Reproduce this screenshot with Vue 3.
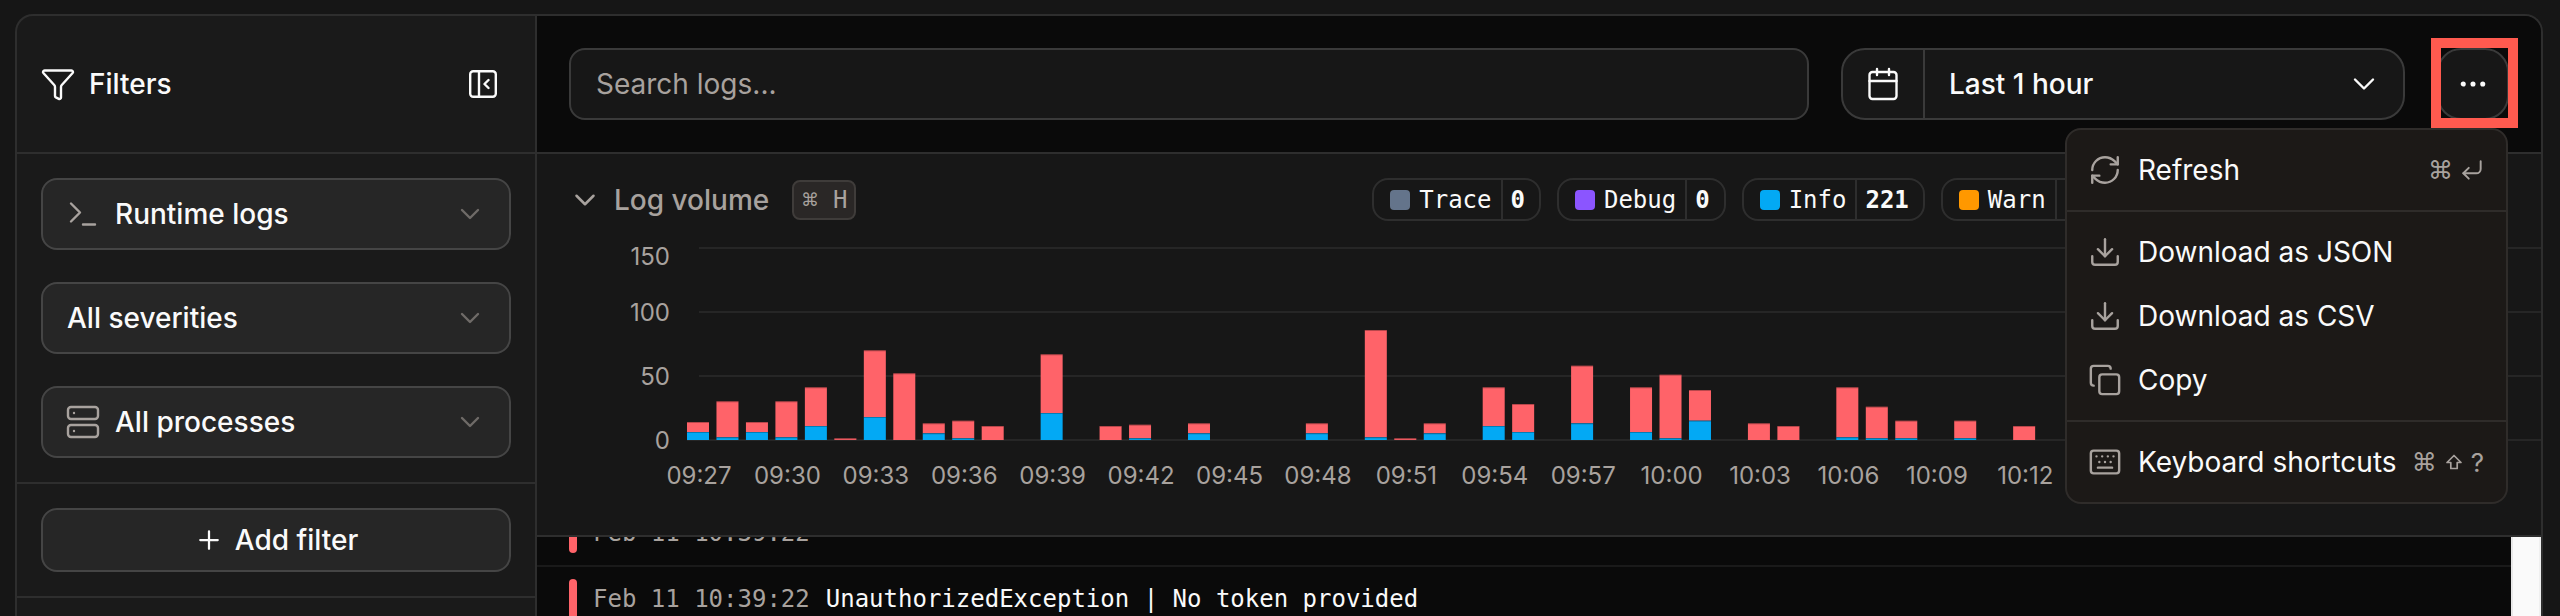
<script setup>
const axisY = [
  { label: '150', line: 248, text: 257 },
  { label: '100', line: 312, text: 313 },
  { label: '50', line: 376, text: 377 },
  { label: '0', line: 440, text: 441 }
]
// [index, top of the red bar, top of the blue bar], read in page pixels from the baseline at 440
const raw = [
  [0, 192, 202], [1, 171.3, 207.3], [2, 192, 202], [3, 171.3, 207.3], [4, 157.3, 196], [5, 208.3, 0],
  [6, 120.3, 187], [7, 143.3, 0], [8, 193.3, 203.3], [9, 190.7, 208.3], [10, 196, 0], [12, 124.3, 183],
  [14, 196, 0], [15, 194.7, 208.3], [17, 193.3, 203.3], [21, 193.3, 203.3], [23, 100, 207.3], [24, 208.3, 0],
  [25, 193.3, 203.3], [27, 157.3, 196], [28, 174, 202], [30, 135.7, 193.3], [32, 157.3, 202],
  [33, 144.7, 208.3], [34, 160, 190.7], [36, 193.3, 0], [37, 196, 0], [39, 157.3, 207.3],
  [40, 176.7, 208.3], [41, 190.7, 208.3], [43, 190.7, 208.3], [45, 196, 0]
]
const bars = raw.map(([i, red, blue]) => ({
  x: 687 + i * 29.47,
  redY: 230 + red,
  blueY: blue ? 230 + blue : 440
}))
const times = ['09:27', '09:30', '09:33', '09:36', '09:39', '09:42', '09:45', '09:48', '09:51', '09:54', '09:57', '10:00', '10:03', '10:06', '10:09', '10:12']
  .map((t, i) => ({ t, x: 699 + i * 88.42 }))
const legend = [
  { name: 'Trace', value: '0', color: '#64748b' },
  { name: 'Debug', value: '0', color: '#8b55ff' },
  { name: 'Info', value: '221', color: '#03a9f4' },
  { name: 'Warn', value: '0', color: '#ff9800' }
]
</script>

<template>
  <div class="page">
    <div class="shell">
      <aside class="side">
        <div class="side-head">
          <svg class="ic white" viewBox="0 0 24 24"><path d="M10 20a1 1 0 0 0 .553.895l2 1A1 1 0 0 0 14 21v-7a2 2 0 0 1 .517-1.341L21.74 4.67A1 1 0 0 0 21 3H3a1 1 0 0 0-.742 1.67l7.225 7.989A2 2 0 0 1 10 14z" /></svg>
          <span class="side-title">Filters</span>
          <svg class="collapse" viewBox="0 0 28 28"><rect x="1.2" y="1.2" width="25.6" height="25.6" rx="3" /><path d="M10 1v26M19.5 10l-4 4 4 4" /></svg>
        </div>
        <div class="side-group">
          <div class="select">
            <svg class="ic muted" viewBox="0 0 24 24"><path d="M4 17l6-6-6-6M12 19h8" /></svg>
            <span class="sel-text">Runtime logs</span>
            <svg class="chev dim end" viewBox="0 0 24 24"><path d="m6 9 6 6 6-6" /></svg>
          </div>
          <div class="select">
            <span class="sel-text">All severities</span>
            <svg class="chev dim end" viewBox="0 0 24 24"><path d="m6 9 6 6 6-6" /></svg>
          </div>
          <div class="select">
            <svg class="ic muted" viewBox="0 0 24 24"><rect x="2" y="2" width="20" height="8" rx="2" /><rect x="2" y="14" width="20" height="8" rx="2" /><path d="M6 6h.01M6 18h.01" /></svg>
            <span class="sel-text">All processes</span>
            <svg class="chev dim end" viewBox="0 0 24 24"><path d="m6 9 6 6 6-6" /></svg>
          </div>
        </div>
        <div class="side-add">
          <div class="add">
            <svg class="plus" viewBox="0 0 24 24"><path d="M5 12h14M12 5v14" /></svg>
            <span>Add filter</span>
          </div>
        </div>
      </aside>

      <main class="main">
        <header class="toolbar">
          <div class="search">Search logs...</div>
          <div class="date">
            <div class="date-ic">
              <svg class="ic white" viewBox="0 0 24 24"><path d="M8 2v4M16 2v4M3 10h18" /><rect x="3" y="4" width="18" height="18" rx="2" /></svg>
            </div>
            <div class="date-val">
              <span>Last 1 hour</span>
              <svg class="ic white end" viewBox="0 0 24 24"><path d="m6 9 6 6 6-6" /></svg>
            </div>
          </div>
          <div class="more">
            <svg class="ic white dots" viewBox="0 0 24 24"><circle cx="12" cy="12" r="1" /><circle cx="18.5" cy="12" r="1" /><circle cx="5.5" cy="12" r="1" /></svg>
            <span class="mark"></span>
          </div>
        </header>

        <section class="volume">
          <div class="vol-head">
            <svg class="chev-vol muted" viewBox="0 0 24 24"><path d="m6 9 6 6 6-6" /></svg>
            <span class="vol-title">Log volume</span>
            <kbd class="kbd"><span class="kbd-cmd">⌘</span><span>H</span></kbd>
            <div class="legends">
              <div v-for="l in legend" :key="l.name" class="legend">
                <span class="swatch" :style="{ background: l.color }"></span>
                <span class="leg-name">{{ l.name }}</span>
                <span class="leg-val">{{ l.value }}</span>
              </div>
            </div>
          </div>
          <svg class="chart" viewBox="537 221 2004 314" width="2004" height="314">
            <g v-for="a in axisY" :key="a.label">
              <line :x1="a.label === '0' ? 687 : 699" x2="2541" :y1="a.line" :y2="a.line" class="grid" />
              <text x="670" :y="a.text + 8" text-anchor="end" class="axis">{{ a.label }}</text>
            </g>
            <g v-for="b in bars" :key="b.x">
              <rect :x="b.x" :y="b.redY" width="22" :height="b.blueY - b.redY" fill="#ff6369" />
              <rect :x="b.x" :y="b.redY" width="22" height="1" fill="#000" opacity=".28" />
              <template v-if="b.blueY < 440">
                <rect :x="b.x" :y="b.blueY" width="22" :height="440 - b.blueY" fill="#03a9f4" />
                <rect :x="b.x" :y="b.blueY" width="22" height="1" fill="#000" opacity=".25" />
              </template>
            </g>
            <text v-for="t in times" :key="t.t" :x="t.x" y="484" text-anchor="middle" class="axis">{{ t.t }}</text>
          </svg>
        </section>

        <div class="logs">
          <div class="rows">
            <div class="row first">
              <span class="bar"></span>
              <span class="ts">Feb 11 10:39:22</span>
            </div>
            <div class="row">
              <span class="bar"></span>
              <span class="ts">Feb 11 10:39:22</span>
              <span class="msg">UnauthorizedException | No token provided</span>
            </div>
          </div>
          <div class="scroll"></div>
        </div>

        <div class="menu">
          <div class="m-group">
            <div class="m-item">
              <svg class="m-ic muted" viewBox="0 0 24 24"><path d="M3 12a9 9 0 0 1 9-9 9.75 9.75 0 0 1 6.74 2.74L21 8" /><path d="M21 3v5h-5" /><path d="M21 12a9 9 0 0 1-9 9 9.75 9.75 0 0 1-6.74-2.74L3 16" /><path d="M8 16H3v5" /></svg>
              <span class="m-text">Refresh</span>
              <span class="keys">
                <span class="key">⌘</span>
                <svg class="enter" viewBox="0 0 24 24"><path d="M20 4v7a4 4 0 0 1-4 4H4" /><path d="m9 10-5 5 5 5" /></svg>
              </span>
            </div>
          </div>
          <div class="m-group">
            <div class="m-item">
              <svg class="m-ic muted" viewBox="0 0 24 24"><path d="M12 15V3" /><path d="M21 15v4a2 2 0 0 1-2 2H5a2 2 0 0 1-2-2v-4" /><path d="m7 10 5 5 5-5" /></svg>
              <span class="m-text">Download as JSON</span>
            </div>
            <div class="m-item">
              <svg class="m-ic muted" viewBox="0 0 24 24"><path d="M12 15V3" /><path d="M21 15v4a2 2 0 0 1-2 2H5a2 2 0 0 1-2-2v-4" /><path d="m7 10 5 5 5-5" /></svg>
              <span class="m-text">Download as CSV</span>
            </div>
            <div class="m-item">
              <svg class="m-ic muted" viewBox="0 0 24 24"><rect x="8" y="8" width="14" height="14" rx="2" /><path d="M4 16c-1.1 0-2-.9-2-2V4c0-1.1.9-2 2-2h10c1.1 0 2 .9 2 2" /></svg>
              <span class="m-text">Copy</span>
            </div>
          </div>
          <div class="m-group">
            <div class="m-item">
              <svg class="m-ic muted" viewBox="0 0 24 24"><rect x="2" y="4" width="20" height="16" rx="2" /><path d="M6 8h.01M10 8h.01M14 8h.01M18 8h.01M8 12h.01M12 12h.01M16 12h.01M7 16h10" /></svg>
              <span class="m-text">Keyboard shortcuts</span>
              <span class="keys wide">
                <span class="key">⌘</span>
                <svg class="shift" viewBox="0 0 18 18"><path d="M9 2.5 16 9.5H12.2V15.5H5.8V9.5H2Z" /></svg>
                <span class="key q">?</span>
              </span>
            </div>
          </div>
        </div>
      </main>
    </div>
  </div>
</template>

<style>
html, body { margin: 0; background: #171717; }
</style>

<style scoped>
.page {
  width: 2560px;
  height: 616px;
  overflow: hidden;
  background: #161616;
  padding: 14px 17px 0 15px;
  box-sizing: border-box;
  font-family: Inter, "Liberation Sans", sans-serif;
  color: #fafafa;
}
.shell {
  display: flex;
  height: 640px;
  box-sizing: border-box;
  border: 2px solid #2e2e2e;
  border-bottom: 0;
  border-radius: 18px 18px 0 0;
  overflow: hidden;
  background: #1a1a1a;
}
svg { display: block; flex: none; }
.ic, .chev, .m-ic, .chev-vol {
  fill: none;
  stroke: currentColor;
  stroke-width: 1.6;
  stroke-linecap: round;
  stroke-linejoin: round;
}
.ic { width: 36px; height: 36px; }
.chev { width: 32px; height: 32px; margin-right: 2px; stroke-width: 1.8; }
.chev-vol { width: 34px; height: 34px; margin: 0 1px; stroke-width: 1.8; }
.m-ic { width: 34px; height: 34px; stroke-width: 1.7; }
.white { color: #fafafa; }
.muted { color: #a8a29e; }
.dim { color: #6f6b68; }
.end { margin-left: auto; }

.side {
  width: 520px;
  flex: none;
  box-sizing: border-box;
  border-right: 2px solid #2e2e2e;
}
.side-head {
  height: 138px;
  box-sizing: border-box;
  border-bottom: 2px solid #2e2e2e;
  display: flex;
  align-items: center;
  padding: 0 22px 0 23px;
}
.side-title {
  margin-left: 13px;
  font-size: 28px;
  font-weight: 500;
}
.collapse {
  width: 28px;
  height: 28px;
  margin-left: auto;
  margin-right: 16px;
  fill: none;
  stroke: #fafafa;
  stroke-width: 2.4;
  stroke-linecap: round;
  stroke-linejoin: round;
}
.side-group {
  display: flex;
  flex-direction: column;
  gap: 32px;
  padding: 24px;
  border-bottom: 2px solid #2e2e2e;
}
.select, .add {
  display: flex;
  align-items: center;
  box-sizing: border-box;
  background: #262626;
  border: 2px solid #454545;
  border-radius: 16px;
}
.select {
  height: 72px;
  padding: 0 21px 0 24px;
  font-size: 28px;
}
.select > .ic:first-child { margin-left: -2px; }
.sel-text { font-weight: 500; }
.select .ic + .sel-text { margin-left: 14px; }
.side-add {
  padding: 24px;
  border-bottom: 2px solid #2e2e2e;
}
.add {
  height: 64px;
  justify-content: center;
  gap: 11px;
  font-size: 28px;
  font-weight: 500;
}
.plus {
  width: 30px;
  height: 30px;
  fill: none;
  stroke: #fafafa;
  stroke-width: 1.8;
  stroke-linecap: round;
}

.main {
  position: relative;
  flex: 1;
  min-width: 0;
  display: flex;
  flex-direction: column;
  background: #0a0a0a;
}
.toolbar {
  height: 138px;
  flex: none;
  box-sizing: border-box;
  border-bottom: 2px solid #2e2e2e;
  display: flex;
  gap: 32px;
  padding: 32px;
}
.search {
  flex: 1;
  height: 72px;
  box-sizing: border-box;
  background: #171717;
  border: 2px solid #3a3a3a;
  border-radius: 16px;
  display: flex;
  align-items: center;
  padding: 0 25px;
  font-size: 28px;
  color: #a8a29e;
}
.date {
  width: 564px;
  height: 72px;
  flex: none;
  box-sizing: border-box;
  display: flex;
  background: #171717;
  border: 2px solid #3a3a3a;
  border-radius: 24px;
}
.date-ic {
  width: 82px;
  box-sizing: border-box;
  flex: none;
  border-right: 2px solid #3a3a3a;
  display: flex;
  align-items: center;
  justify-content: center;
}
.date-val {
  flex: 1;
  display: flex;
  align-items: center;
  padding: 0 21px 0 24px;
  font-size: 28px;
  font-weight: 500;
}
.more {
  position: relative;
  width: 72px;
  height: 72px;
  flex: none;
  box-sizing: border-box;
  background: #171717;
  border: 2px solid #3a3a3a;
  border-radius: 24px;
  display: flex;
  align-items: center;
  justify-content: center;
}
.dots { fill: currentColor; stroke-width: 1.4; }
.mark {
  position: absolute;
  left: -8px;
  right: -11px;
  top: -12px;
  bottom: -10px;
  border: 10px solid #ff5a4f;
}

.volume {
  height: 383px;
  flex: none;
  box-sizing: border-box;
  background: #171717;
  border-bottom: 2px solid #2e2e2e;
  display: flex;
  flex-direction: column;
  padding-top: 24px;
  overflow: hidden;
}
.vol-head {
  height: 43px;
  flex: none;
  display: flex;
  align-items: center;
  padding-left: 30px;
}
.vol-title {
  margin-left: 11px;
  font-size: 28px;
  font-weight: 500;
  color: #a8a29e;
}
.kbd {
  margin-left: 23px;
  width: 64px;
  height: 40px;
  box-sizing: border-box;
  display: flex;
  align-items: center;
  justify-content: center;
  gap: 14px;
  background: #2a2726;
  border: 2px solid #3f3c3a;
  border-radius: 8px;
  font-family: "DejaVu Sans Mono", monospace;
  font-size: 24px;
  color: #a8a29e;
}
.kbd-cmd { font-family: "DejaVu Sans", sans-serif; font-size: 18px; }
.legends {
  margin-left: 516px;
  display: flex;
  gap: 16px;
}
.legend {
  height: 43px;
  box-sizing: border-box;
  display: flex;
  align-items: center;
  border: 2px solid #2e2e2e;
  border-radius: 16px;
  padding-left: 16px;
  font-family: "DejaVu Sans Mono", monospace;
  font-size: 24px;
}
.swatch {
  width: 20px;
  height: 20px;
  border-radius: 4px;
  margin-right: 9px;
}
.leg-name {
  padding-right: 9px;
  height: 100%;
  display: flex;
  align-items: center;
  border-right: 2px solid #2e2e2e;
}
.leg-val {
  padding: 0 14px 0 8px;
  font-weight: 700;
}
.chart { flex: none; }
.grid { stroke: #262626; stroke-width: 2; }
.axis {
  font-family: Inter, sans-serif;
  font-size: 24px;
  fill: #a8a29e;
}

.logs {
  flex: 1;
  min-height: 0;
  display: flex;
  overflow: hidden;
}
.rows { flex: 1; min-width: 0; }
.row {
  height: 66px;
  box-sizing: border-box;
  border-bottom: 2px solid #1a1a1a;
  display: flex;
  align-items: center;
  padding-left: 32px;
  font-family: "DejaVu Sans Mono", monospace;
  font-size: 24px;
}
.first { margin-top: -36px; }
.bar {
  width: 8px;
  height: 40px;
  flex: none;
  border-radius: 4px;
  background: #ff6369;
  margin-right: 16px;
}
.ts { color: #a8a29e; margin-right: 16px; }
.msg { color: #fafafa; }
.scroll {
  width: 30px;
  flex: none;
  box-sizing: border-box;
  background: #fafafa;
  border-left: 2px solid #e8e8e8;
  border-right: 2px solid #f0f0f0;
}

.menu {
  position: absolute;
  right: 33px;
  top: 112px;
  width: 443px;
  box-sizing: border-box;
  background: #1c1917;
  border: 2px solid #2f2c2a;
  border-radius: 16px;
}
.m-group { padding: 8px; }
.m-group + .m-group { border-top: 2px solid #2f2c2a; }
.m-item {
  height: 64px;
  display: flex;
  align-items: center;
  padding: 0 13px;
  font-size: 28px;
}
.m-text { margin-left: 16px; }
.keys {
  margin-left: auto;
  display: flex;
  align-items: center;
  gap: 6px;
  color: #a8a29e;
}
.wide { gap: 8px; }
.key {
  font-family: "DejaVu Sans", sans-serif;
  font-size: 25px;
}
.shift {
  width: 18px;
  height: 18px;
  fill: none;
  stroke: #a8a29e;
  stroke-width: 1.7;
  stroke-linejoin: round;
}
.q { font-family: Inter, sans-serif; font-size: 26px; margin-right: 1px; }
.enter {
  width: 26px;
  height: 26px;
  fill: none;
  stroke: #a8a29e;
  stroke-width: 1.8;
  stroke-linecap: round;
  stroke-linejoin: round;
}
</style>
